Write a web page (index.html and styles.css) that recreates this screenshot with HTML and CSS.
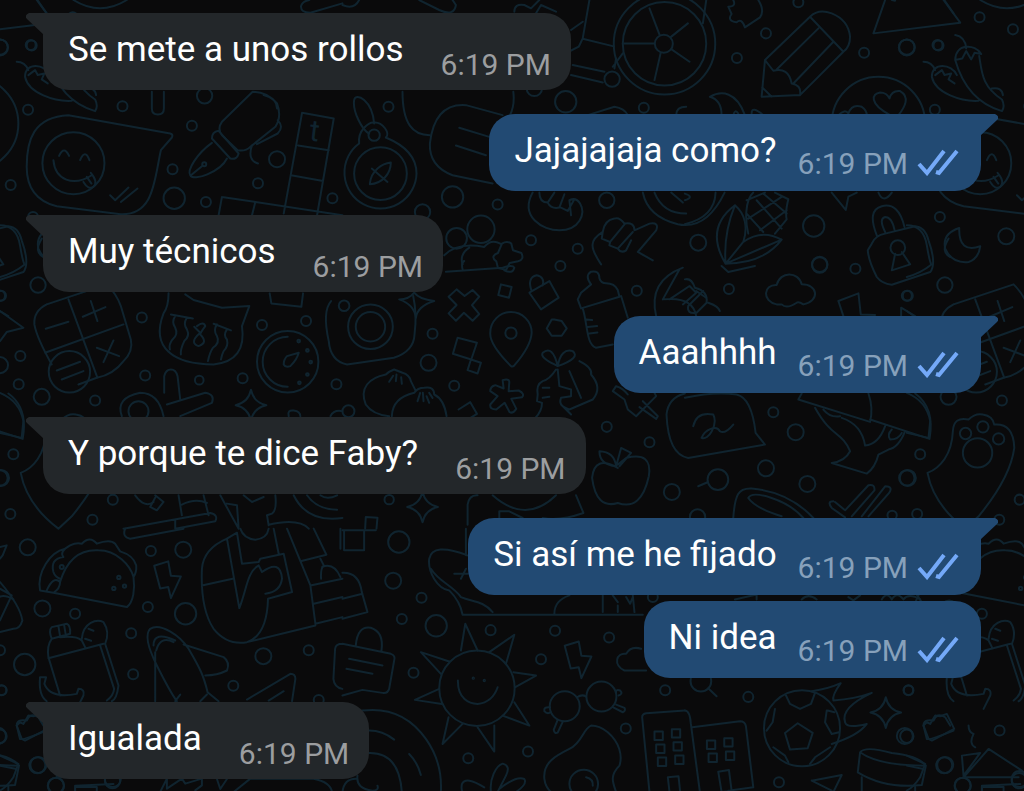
FILE: index.html
```html
<!DOCTYPE html>
<html lang="es">

<head>
  <meta charset="utf-8">
  <meta name="viewport" content="width=device-width, initial-scale=1">
  <title>Chat</title>
  <link rel="stylesheet" href="styles.css">
</head>

<body>
  <!-- wallpaper -->
  <svg class="wallpaper" viewBox="0 0 3072 2373" preserveAspectRatio="xMinYMin slice" aria-hidden="true">
    <defs>
      <path id="star" d="M0-46Q8-8 46 0Q8 8 0 46Q-8 8-46 0Q-8-8 0-46z" />
      <path id="bolt" d="M-42-42L0-55L8-12L38-10L8 55L0 22L-24 26z" />
      <g id="doodles">
        <!-- row 1, left -->
        <g>
          <path d="M220 0Q300 50 380 0M112 0L140 40M1026 10L930 38q-30 0-28-20 5-15 25-18" />
          <path d="M50 185q25 0 35 25M75 230c0-45 60-40 75-5M75 230c10 50 90 75 140 72M85 225l20-15 8 15 20-5-8 18 18 12M145 105q30 5 33 40M145 180c0-50 60-50 78-18l-20-4-10 20-15-25-12 22-21 5c20 70 60 130 140 153q10-15 0-35c-60-40-60-80-68-130M255 265q30-5 33 20" />
          <path d="M205 345L510 400q10 3 5 12L482 450c-20 90-20 195-120 192L170 618C100 600 80 550 80 500C80 420 100 350 205 345z" />
          <path d="M177 467q15-32 30 0M240 480q15-35 28 0M160 480c5 60 60 80 115 45M250 545q15 25 30 15 15-15-8-42M260 530l14 20M330 585l15 15 40-38M362 605l50-40" />
          <path d="M757 275L665 365Q650 385 665 405L712 450Q735 455 750 440L825 380Q845 350 830 310Q800 275 757 275M790 285q40 10 40 40M832 360q20 20 0 40L770 432M755 435q-15 45 18 55" />
          <path d="M655 392L715 460q-5 20-25 15L635 415q0-20 20-23zM635 428C590 460 560 510 570 525C580 545 660 515 680 475M572 525L605 498" />
          <path d="M905 338L1000 355L950 645M905 338L850 640M893 436l92 14M876 526l92 16M665 590L1026 645M665 590L655 645M765 605L755 645M455 275v50q0 18 18 18t18-18v-50" />
          <path d="M0 675q50 0 60 60t15 57Q40 820 0 830M125 715q-25 40 5 55" />
          <circle cx="220" cy="489" r="93" /><circle cx="612" cy="492" r="6" />
          <circle cx="92" cy="135" r="15" /><circle cx="84" cy="329" r="15" /><circle cx="367" cy="318" r="15" />
          <circle cx="575" cy="377" r="15" /><circle cx="517" cy="507" r="15" /><circle cx="32" cy="554" r="15" />
          <circle cx="617" cy="605" r="15" /><circle cx="773" cy="549" r="15" /><circle cx="996" cy="594" r="15" />
          <circle cx="0" cy="141" r="23" /><circle cx="613" cy="287" r="23" /><circle cx="830" cy="477" r="24" />
          <circle cx="522" cy="594" r="32" />
          <text x="924" y="420" transform="rotate(7 924 420)">t</text>
        </g>
        <!-- row 1, middle -->
        <g transform="translate(1026 0)">
          <path d="M0 15q35 15 50-15M230 0l60 30q45 20 50-15l-10-15M515 35q0-25 30-20l20 10 25-25M580 40l15-25 45 20M740 0l-20 115-12 25-30 15M723 117l90 22M720 65l-35 25M810 200l30-40M690 195l95 20M685 225l95 22M820 175l-5 30" />
          <path d="M960 130L920 25M960 130H840M960 130L935 240M960 130L1040 185M960 130L1035 70M1080 70l10-70" />
          <circle cx="965" cy="131" r="152" /><circle cx="965" cy="131" r="125" /><circle class="solid" cx="963" cy="131" r="27" />
          <circle cx="808" cy="237" r="23" />
          <path d="M95 370C90 300 40 275 35 300C30 335 60 390 80 400M180 275C180 370 210 405 262 405M512 275q5 40-10 70" />
          <path d="M50 430C45 390 80 365 95 367C120 365 145 400 130 412Q222 450 222 520A108 108 0 1 1 50 430" />
          <path d="M82 552C85 510 120 490 145 487C145 520 120 550 82 552zM88 505L135 545" />
          <circle cx="95" cy="405" r="17" /><circle cx="114" cy="520" r="79" />
          <path d="M480 345L370 315C300 310 270 360 262 430C260 480 290 510 330 525L450 550M350 383L440 410M340 436L430 465" />
          <path d="M570 577C530 650 600 690 650 690C710 690 730 640 712 610Q700 590 680 600l5 45M590 577q0 30 25 30l20-30M615 607q10 20 35 15l15-40M650 620l25 12 20-35" />
          <path d="M775 792C740 740 740 720 780 695Q785 660 815 655q15-5 30 15 30-5 30 20l45-20q30-5 20 20L885 755l45 25M780 695l-3 20 25 10 45-55M802 725l-2 10 25 10 45-50M825 745q10 15 25 5l15-30" />
          <path d="M900 577Q915 650 1005 672Q1090 690 1145 577M935 577Q960 640 1030 640M985 577l35 30M735 345l80-25q30 5 40 25M1000 345q0-25 30-25" />
          <path d="M305 765q40-40 120-25 20-25 48-10M360 792q-10-30 20-50M478 730q15-10 28 0l5 20 25 8q10 20-10 25l-25 5-10 20-25-5-5-20q-20-15 5-25z" />
          <circle cx="138" cy="320" r="15" /><circle cx="669" cy="305" r="32" /><circle cx="903" cy="323" r="15" />
          <circle cx="330" cy="590" r="32" /><circle cx="465" cy="613" r="15" /><circle cx="240" cy="635" r="23" />
          <circle cx="415" cy="687" r="41" /><circle cx="342" cy="714" r="31" /><circle cx="565" cy="720" r="15" />
          <circle cx="705" cy="745" r="15" /><circle cx="792" cy="600" r="23" /><circle cx="575" cy="265" r="23" />
        </g>
        <!-- row 1, right -->
        <g transform="translate(2052 0)">
          <path d="M145 0q10 20-15 20l10 22q-15 20 15 25 15-15 25 15l45-30q15-20-5-52" />
          <path d="M240 180L375 50Q400 25 440 40Q490 60 495 110Q495 140 475 155L345 285L230 290zM375 50L475 155M400 85L275 208M445 125L325 250M240 180L265 212Q310 200 320 250Q350 255 345 285M232 262L260 290" />
          <path d="M600 0L565 100L825 68L775 0M620 0l10 2" />
          <path d="M75 290C110 270 155 275 180 345M75 290Q110 300 110 345M145 345q5-20 15-5M200 340q0-25 35 5" />
          <circle cx="580" cy="370" r="140" />
          <path d="M615 345C550 310 560 280 585 277Q605 277 613 295Q620 270 645 273C675 290 660 320 640 345M460 345q20-20 30-5 10-30 40-20 15 10 15 25" />
          <path d="M150 615C180 640 190 680 175 725L122 790C80 720 90 660 150 615zM150 615Q115 700 122 790M175 725Q230 685 290 718C250 770 190 790 122 790L290 718" />
          <path d="M205 577C180 600 180 660 190 700M270 577l40 20q-10 40-5 60L270 700M215 600L290 685M235 580L305 640M185 640L235 695M290 590L190 655M305 630L225 690M240 577L185 600" />
          <path d="M0 600q30-10 0-20M92 577Q90 650 0 672M440 577l42 52 8-40 25-12M580 577q15 35 40 0" />
          <path d="M575 705Q545 630 590 618Q640 605 658 680M600 695Q580 655 600 650Q620 650 628 688M560 730Q570 705 600 700L690 678Q720 680 730 720Q755 790 735 815L620 853Q590 850 575 830Q550 780 548 750zM630 760L620 810L675 792L650 755" />
          <circle cx="638" cy="742" r="22" />
          <path d="M822 683Q770 700 780 745Q800 790 850 785Q880 775 885 738Q820 760 822 683z" />
          <circle cx="243" cy="100" r="15" /><circle cx="156" cy="174" r="15" /><circle cx="340" cy="7" r="15" />
          <circle cx="537" cy="158" r="15" /><circle cx="665" cy="142" r="24" /><circle cx="760" cy="136" r="15" />
          <circle cx="883" cy="52" r="15" /><circle cx="983" cy="88" r="15" /><circle cx="386" cy="677" r="32" />
          <circle cx="40" cy="727" r="24" /><circle cx="764" cy="650" r="15" /><circle cx="963" cy="708" r="24" />
          <circle cx="404" cy="792" r="23" />
        </g>
        <!-- row 2, left -->
        <g transform="translate(0 792)">
          <path d="M140 120L320 60Q350 90 362 125L392 225Q400 260 370 290Q340 330 290 340L235 360M155 300Q110 220 103 180Q100 140 140 120M205 105L292 340M135 265L370 180M137 193L205 172M248 157L316 128M272 110L292 170M290 250L357 275M340 228L310 293" />
          <circle cx="208" cy="322" r="62" />
          <path d="M170 318L240 292M185 345L250 320" />
          <path d="M505 87q0 40-15 60C450 250 520 300 640 300Q740 290 725 185L747 125L665 130L580 107L555 90" />
          <path d="M512 150L578 162M525 155q-12 18 0 35 10 20-8 35-12 15-8 30M560 160q-12 18 0 35 10 20-8 35-12 25-10 40M640 178L692 198M650 180q-12 18 0 35 10 20-12 35-10 15-15 40M680 195q-12 18 0 30 5 20-10 35-5 10-8 25M590 185q20-15 25 0-15 20-15 25 25 25-5 35-30-10 5-40l-18-18" />
          <path d="M492 385V335q5-20 20-20t20 20L540 405M500 420L615 385q30 5 20 30L540 455M365 455Q345 400 420 385Q475 385 490 455" />
          <circle cx="415" cy="440" r="30" /><circle cx="862" cy="292" r="92" />
          <path d="M862 217A75 75 0 0 0 862 367M850 300Q850 285 860 275L895 265Q890 285 870 305Q855 310 850 300z" />
          <circle cx="895" cy="230" r="4" /><circle cx="921" cy="258" r="4" /><circle cx="931" cy="293" r="4" /><circle cx="921" cy="330" r="4" /><circle cx="897" cy="355" r="4" />
          <path d="M808 87l5 30 90 10 5-40M0 140L70 190L20 203L0 230M0 385Q60 410 70 470L65 520L0 505" />
          <use href="#star" x="752" y="422" />
          <path d="M865 455q-5-20 15-17t20 17M990 455q10-20 36-15" />
          <path d="M62 625C100 610 135 570 138 500Q140 455 185 465Q205 445 228 450Q258 455 262 480Q320 475 322 550Q310 640 215 755L175 792Q80 720 62 625z" />
          <path d="M405 692q30 40 55 20M465 692l25 20-20 25-20-10 15-28M535 692l10 60M610 692l15 60M545 720q40-20 75-5M370 792L630 745q25 5 15 25L525 792V765M660 692l55 100-5-70-30-5M825 692q5 45-10 55l-15 5 5 30M805 780q90-20 120 12M730 692l25 20 35-15" />
          <path d="M880 692Q920 775 1026 760M920 692Q950 735 1010 735M960 692q20 15 50 0" />
          <path d="M992 110Q965 140 985 230Q990 290 1040 300L1180 280Q1240 260 1242 210Q1250 150 1238 95" />
          <circle cx="425" cy="159" r="15" /><circle cx="61" cy="275" r="15" /><circle cx="56" cy="359" r="15" />
          <circle cx="435" cy="333" r="15" /><circle cx="597" cy="347" r="13" /><circle cx="727" cy="341" r="15" />
          <circle cx="785" cy="182" r="15" /><circle cx="917" cy="170" r="15" /><circle cx="285" cy="408" r="15" />
          <circle cx="1008" cy="359" r="15" /><circle cx="40" cy="569" r="15" /><circle cx="338" cy="705" r="15" />
          <circle cx="277" cy="765" r="15" /><circle cx="31" cy="748" r="15" /><circle cx="0" cy="94" r="15" />
          <circle cx="114" cy="62" r="23" /><circle cx="125" cy="397" r="24" /><circle cx="0" cy="302" r="24" />
          <circle cx="0" cy="640" r="23" />
        </g>
        <!-- row 2, middle -->
        <g transform="translate(1026 792)">
          <circle cx="84" cy="187" r="67" /><circle cx="84" cy="187" r="44" /><circle cx="5" cy="124" r="16" />
          <path d="M170 105q30 0 45-20 15 20 60 25-50 15-55 50-5-40-50-55z" />
          <path d="M342 75l24 20 24-18 20 20-22 25 22 27-20 20-26-24-24 24-22-22 24-25-24-25z" />
          <path d="M475 60l32 8-8 32-32-8zM345 220l58 15-17 50-55-17zM385 285l30 10-10 32-30-10zM348 435l35-22 20 35-35 22" />
          <path d="M560 85L620 50L648 100L595 135zM567 80q-15-40 15-47 25 5 18 30M635 165l22 5 15 22-15 22h-30l-15-22 15-27z" />
          <path d="M505 305Q440 240 443 205A62 62 0 0 1 567 205Q565 245 515 303q-5 5-10 2z" /><circle cx="505" cy="206" r="17" />
          <path d="M310 22L480 10q30-10 35 0-5 20-30 8M360 15q-5-20 5-25" />
          <path d="M705 105L715 85L745 60q-20-25 0-38 25-5 25 20 5 15 20 15 25 0 35 20l5 20L715 132zM720 132C735 180 730 240 760 250L810 240M835 95L855 160M730 165l18 2M735 188l28-3M740 207l24-3" />
          <path d="M70 420C50 370 80 340 130 330q10-10 25-15l25 10q20 5 25 25l15 30M70 420q20 30 70 35M148 455Q150 400 215 385q10-15 30-15 30-5 30 20Q305 405 312 455M140 352l12-18M160 350l2-20M178 358l-2-20M225 410l8-25M243 410l-2-25M260 415l-8-20M270 400l-10-15" />
          <path d="M480 347q20-5 20 5l-2 28 30-2q20 10 10 20l-32 5 15 30q-10 15-20 10l-15-28-25 20q-20 0-18-15l22-25-22-15q0-15 15-18l25 10z" />
          <path d="M645 305Q590 280 600 265q30-25 45 40Q655 250 690 260q25 20-45 45zM640 315q-20 30-40 35-20 10-15 40l-2 20 15 5q0 25-20 45M645 315l5 50 35 10v20M680 320L715 400M710 290q40 20 35 40 35 40 5 75l-70 30q-35-10-25-35l30-5M600 370l20 0M600 400l20-3M655 420l30 30" />
          <path d="M855 390q-15-20-35-25l-10 15 35 25 10 30 25 20 60-60-5-10M900 410l45 45-5 8-50-35" />
          <path d="M825 610Q755 570 748 640Q760 735 825 715Q895 740 918 635Q930 560 850 580L825 600M820 605Q770 600 770 560Q815 562 820 605L835 550L865 565L830 605" />
          <path d="M450 692Q550 780 640 692M700 692L722 745Q650 770 600 760M375 720q5-30 30-28M375 720v60M470 740h30l40 20M470 740v20" />
          <use href="#star" x="240" y="727" />
          <path d="M68 792l2-35 35 2-3 33" />
          <path d="M940 155Q915 50 1020 10M1060 155q-10-60-100-50l50-90M980 105l60-40 20 20-40 35M1060 80l30 20" />
          <circle cx="270" cy="208" r="15" /><circle cx="258" cy="295" r="24" /><circle cx="335" cy="364" r="15" />
          <circle cx="882" cy="79" r="15" /><circle cx="792" cy="487" r="15" /><circle cx="920" cy="533" r="15" />
          <circle cx="987" cy="682" r="24" /><circle cx="140" cy="705" r="14" /><circle cx="653" cy="5" r="15" />
          <circle cx="18" cy="440" r="18" />
        </g>
        <!-- row 2, right -->
        <g transform="translate(2052 792)">
          <path d="M0 45q20-5 30 25 40 10 35 45l-30 30q-30 5-25-20l45-45M70 115q30 10 35 25" />
          <path d="M275 120C230 110 235 60 275 62C285 20 340 20 350 60C400 60 405 110 355 120Q340 110 335 115Q305 135 290 120z" />
          <path d="M460 110L520 87L527 150L570 152M475 155L460 110M648 155V130L690 155M110 5l20 18 80-18" />
          <path d="M0 387Q-50 400-55 450Q-50 570 10 580L240 540L212 505Q200 400 155 390Q90 380 0 400M25 485Q35 440 85 450C100 480 70 530 50 520C60 495 95 480 105 500Q120 510 145 480" />
          <path d="M350 387L340 405L555 472Q565 430 550 387M555 465L733 523Q750 430 690 387M390 430C440 520 470 500 495 560Q480 590 440 595L545 627Q570 610 580 570Q600 560 610 555Q640 550 660 500M415 435q20 25 50 20M470 460Q530 480 540 543Q580 540 600 485M620 495q-15 15-5 30 25 0 35-20" />
          <circle cx="99" cy="645" r="31" /><path d="M40 665l28-12" />
          <path d="M145 760C150 690 160 670 200 672Q310 680 385 760M190 700Q200 680 260 700Q320 720 355 760M190 700Q210 730 290 755" />
          <path d="M445 710q-20 0-5 20l40 28M450 712l30 25 70-75q20-5 18 15L500 755M530 755L600 665q25 0 12 20L550 755" />
          <circle cx="877" cy="565" r="44" /><circle cx="841" cy="507" r="17" /><circle cx="893" cy="487" r="17" /><circle cx="940" cy="523" r="17" />
          <circle cx="132" cy="74" r="15" /><circle cx="404" cy="2" r="23" /><circle cx="511" cy="13" r="15" />
          <circle cx="668" cy="94" r="15" /><circle cx="265" cy="443" r="15" /><circle cx="332" cy="503" r="24" />
          <circle cx="243" cy="611" r="24" /><circle cx="367" cy="658" r="24" /><circle cx="668" cy="640" r="24" />
          <circle cx="38" cy="757" r="23" /><circle cx="621" cy="752" r="14" />
        </g>
        <!-- row 3, left -->
        <g transform="translate(0 1584)">
          <path d="M375 0q-10 25 15 30L550 0M0 55l20-5-12 30-8 10M0 160Q60 230 67 275Q60 300 40 300L0 310M0 180L35 200L0 275" />
          <path d="M120 185C110 130 150 70 195 60L210 50Q230 40 245 45Q270 20 290 45Q330 30 345 45L360 68Q400 80 408 110Q410 130 400 145C405 180 400 220 380 235L160 192zM180 160Q210 60 295 65C350 65 390 110 400 145M120 185L160 192Q180 180 180 160Q160 140 140 185M195 60Q180 75 190 85Q150 90 160 130Q165 145 180 150" />
          <circle class="solid" cx="356" cy="146" r="5" /><circle class="solid" cx="341" cy="179" r="5" /><circle class="solid" cx="373" cy="172" r="5" />
          <circle cx="185" cy="115" r="6" />
          <use href="#bolt" x="504" y="153" />
          <path d="M720 0Q730 30 765 33Q800 30 805 0M680 30Q610 60 605 120Q600 240 640 300Q680 350 740 340Q800 320 803 210L875 190L850 75L780 90L775 100L725 105L710 12L680 30L717 238C740 180 740 130 775 110L785 130Q840 90 845 150Q840 190 795 195M605 170L697 150M820 0L835 75M740 340L945 290M860 0L930 170L945 285L1026 265M940 0L978 78L903 97M930 170L1026 150M940 225L1026 205M960 90L970 110Q960 120 962 150M965 115Q1000 100 1020 145M1020 0V60" />
          <path d="M155 295L200 285Q212 290 210 315L155 330Q145 305 155 295zM175 292l5 30M192 288l5 30M155 330Q140 350 145 385L180 500M145 388L310 345M180 325Q230 320 245 335L255 355M245 330C250 280 290 270 310 280Q330 310 315 345M265 300l15 6M255 330l18 6M300 350L342 480Q340 500 320 515M315 345L355 470Q350 510 335 517M120 445h18l-5 20Q150 510 230 495L235 480Q255 480 250 500Q240 520 230 540M120 445Q115 500 140 517" />
          <path d="M450 300C430 320 450 370 470 410Q510 490 530 517M450 300C480 280 540 320 565 360C600 420 610 440 622 490L655 517M460 350Q460 305 525 335M468 365Q480 320 520 340M550 347L670 385Q690 400 680 425Q650 440 615 440M465 370V517M525 517l15-20M600 517l20-20" />
          <path d="M740 512L870 435q15 0 15 15L875 517M805 515L850 487" />
          <path d="M50 590Q50 570 80 575Q90 550 115 565L130 590M60 630q5 5 80-25M50 590L60 630M0 680L55 705L40 745Q20 775 0 785M0 710L50 720M225 770v20M225 770L340 765M480 789l20-40v30l45-30 10 15 50-15 0 20-20 15M650 750l10 30 20-30M700 789l50-40h190q50 10 55 40" />
          <circle cx="83" cy="56" r="24" /><circle cx="452" cy="67" r="15" /><circle cx="549" cy="63" r="24" />
          <circle cx="127" cy="239" r="24" /><circle cx="225" cy="255" r="15" /><circle cx="443" cy="235" r="15" />
          <circle cx="556" cy="255" r="32" /><circle cx="393" cy="313" r="15" /><circle cx="74" cy="407" r="32" />
          <circle cx="0" cy="364" r="15" /><circle cx="399" cy="436" r="15" /><circle cx="789" cy="382" r="24" />
          <circle cx="925" cy="364" r="15" /><circle cx="699" cy="471" r="15" /><circle cx="955" cy="513" r="15" />
          <circle cx="5" cy="484" r="14" /><circle cx="112" cy="709" r="24" /><circle cx="167" cy="770" r="24" />
          <circle cx="337" cy="755" r="23" /><circle cx="0" cy="622" r="20" />
        </g>
        <!-- row 3, middle -->
        <g transform="translate(1026 1584)">
          <path d="M0 5h100M5 65h60V5M5 5v60M0 132Q50 130 58 190L75 250L0 270M0 210L60 195" />
          <path d="M375 80Q270 40 260 90C255 130 285 180 320 185C345 210 355 230 360 258H900M265 120C290 160 330 170 355 205C390 220 420 215 450 250M370 0v80M335 135h40M355 150l15-30M635 255Q635 215 680 200M780 200v50M870 200l5 50M850 205l12 20 8-20M810 200l15 20M825 230v20" />
          <path d="M0 345L145 375q15 5 10 20L140 480q-5 15-20 12L60 483L0 500M0 345Q-20 345-22 360L-27 450Q-25 475 0 480M40 350Q45 290 85 297Q125 310 117 365M20 390L120 410M12 420L90 435" />
          <circle cx="403" cy="478" r="113" />
          <path d="M355 365L368 285L405 365M440 370L515 318L490 405M512 430L580 440L518 475M515 520L560 590L480 560M455 590V668L405 595M360 585L300 645L318 565M298 525L217 513L290 480M295 435L235 370L320 398M346 455C345 510 380 525 405 525Q450 520 465 475" />
          <circle class="solid" cx="392" cy="448" r="2" /><circle class="solid" cx="425" cy="455" r="2" />
          <use href="#bolt" x="708" y="393" />
          <path d="M910 425H845C810 410 820 370 850 375Q865 350 895 360" />
          <circle cx="666" cy="532" r="45" /><circle cx="776" cy="503" r="45" />
          <path d="M703 505q15-10 27-2M622 535q-20-2-17 12 8 10 20 3M645 573l-12 30q2 12 12 8l15-32M820 490q0-10 12-5 10 10-5 15M810 535l30 15q10-5 5-13l-25-10" />
          <path d="M605 750C600 700 640 680 680 660C720 640 720 600 745 590Q770 590 795 610C830 640 840 680 830 710C800 740 810 760 820 789M605 750Q608 775 625 789" />
          <circle cx="723" cy="765" r="43" /><path d="M730 745q22 5 20 25" />
          <path d="M425 775Q370 740 358 765Q355 780 360 789M445 789C440 750 460 710 480 704Q505 710 490 740L465 789M470 780Q520 740 545 750Q555 765 520 789" />
          <path d="M60 545Q180 530 250 630Q300 700 295 789M80 605Q120 605 155 632M80 672Q170 670 178 789M200 675Q225 700 235 738M45 740Q40 780 90 785Q110 785 105 770M0 789q5-40 40-40" />
          <path d="M920 789L898 565q0-10 12-12L1026 545M975 745l32-3 5 47M980 789l-5-44" />
          <path d="M935 608h25v25h-25zM987 601h25v25h-25zM940 647h25v25h-25zM992 640h25v25h-25zM945 686h25v25h-25zM997 680h25v25h-25z" />
          <circle cx="169" cy="40" r="32" /><circle cx="152" cy="156" r="24" /><circle cx="237" cy="207" r="15" />
          <circle cx="178" cy="271" r="15" /><circle cx="281" cy="291" r="32" /><circle cx="444" cy="304" r="15" />
          <circle cx="637" cy="306" r="15" /><circle cx="799" cy="326" r="15" /><circle cx="595" cy="391" r="15" />
          <circle cx="213" cy="432" r="15" /><circle cx="967" cy="484" r="15" /><circle cx="849" cy="599" r="15" />
          <circle cx="377" cy="688" r="15" /><circle cx="556" cy="668" r="15" /><circle cx="930" cy="205" r="15" />
        </g>
        <!-- row 3, right -->
        <g transform="translate(2052 1584)">
          <path d="M150 212l65-15v15M350 212q20-20 45 0M490 205l15 10 20-15M590 212q15-25 30 0 15-25 35 0 15-20 50 0" />
          <circle cx="48" cy="457" r="31" /><path d="M70 478l25 24M0 545q15 0 18 40L45 789M22 595L165 577q15 0 18 15L205 775L130 785M100 728l32-5 8 62-30 4z" />
          <path d="M66 635h25v25h-25zM118 628h25v25h-25zM71 674h25v25h-25zM123 668h25v25h-25z" />
          <circle cx="351" cy="598" r="114" />
          <path d="M338 583L383 612L368 658L315 662L300 612zM303 500L315 525L345 540L378 525L390 492M425 545L420 580L440 615L462 610M428 545l20 5M270 540L263 580L245 605M265 655L300 680L310 700M375 705L390 685L435 655" />
          <path d="M380 487Q430 480 467 463Q440 500 445 515Q510 510 560 492C500 520 470 550 480 580Q485 600 545 585Q520 620 440 645" />
          <use href="#star" x="602" y="551" />
          <path d="M715 590L725 580L735 585L750 560L765 562L785 555L807 600L740 635L730 630zM525 670Q540 650 620 672Q700 680 722 710L710 768Q600 780 518 730zM525 670Q580 710 722 710M530 745V789M690 775v14M380 755L470 738L445 789M380 755L440 785" />
          <path d="M850 590q0 20 15 25-15 30 5 40M830 680L885 672L835 740zM835 745L910 660L1010 725M835 745H1000M890 789v-15h65v15" />
          <circle cx="833" cy="770" r="24" /><circle cx="1003" cy="750" r="24" /><circle cx="780" cy="708" r="24" />
          <circle cx="190" cy="504" r="15" /><circle cx="670" cy="484" r="15" /><circle cx="659" cy="621" r="24" />
          <circle cx="282" cy="760" r="15" /><circle cx="943" cy="605" r="15" />
        </g>
      </g>
    </defs>
    <use href="#doodles" />
    <use href="#doodles" x="-2717" />
    <use href="#doodles" x="2717" />
  </svg>

  <!-- icons shared by the messages -->
  <svg class="sprite" aria-hidden="true">
    <symbol id="tail" viewBox="0 0 18 22">
      <path d="M18 0H3Q-2 2 1 6L18 22z" />
    </symbol>
    <symbol id="read" viewBox="0 0 42 28">
      <path d="M2 16L10 25L27 3M19 24L22 25L40 3" />
    </symbol>
  </svg>

  <main class="chat">
    <div class="message received">
      <svg class="tail"><use href="#tail" /></svg>
      <p class="text">Se mete a unos rollos</p>
      <time class="time">6:19 PM</time>
    </div>
    <div class="message sent">
      <svg class="tail"><use href="#tail" /></svg>
      <p class="text">Jajajajaja como?</p>
      <time class="time">6:19 PM</time>
      <svg class="read"><use href="#read" /></svg>
    </div>
    <div class="message received">
      <svg class="tail"><use href="#tail" /></svg>
      <p class="text">Muy técnicos</p>
      <time class="time">6:19 PM</time>
    </div>
    <div class="message sent">
      <svg class="tail"><use href="#tail" /></svg>
      <p class="text">Aaahhhh</p>
      <time class="time">6:19 PM</time>
      <svg class="read"><use href="#read" /></svg>
    </div>
    <div class="message received">
      <svg class="tail"><use href="#tail" /></svg>
      <p class="text">Y porque te dice Faby?</p>
      <time class="time">6:19 PM</time>
    </div>
    <div class="message sent">
      <svg class="tail"><use href="#tail" /></svg>
      <p class="text">Si así me he fijado</p>
      <time class="time">6:19 PM</time>
      <svg class="read"><use href="#read" /></svg>
    </div>
    <div class="message sent grouped">
      <p class="text">Ni idea</p>
      <time class="time">6:19 PM</time>
      <svg class="read"><use href="#read" /></svg>
    </div>
    <div class="message received">
      <svg class="tail"><use href="#tail" /></svg>
      <p class="text">Igualada</p>
      <time class="time">6:19 PM</time>
    </div>
  </main>
</body>

</html>
```
FILE: styles.css
```css
* {
  margin: 0;
  padding: 0;
  box-sizing: border-box;
}

body {
  position: relative;
  min-height: 100vh;
  overflow-x: hidden;
  background-color: #0a0a0b;
  font-family: Roboto, "Liberation Sans", sans-serif;
}

/* wallpaper */
.wallpaper {
  position: absolute;
  top: 0;
  left: 0;
  width: 100%;
  height: 100%;
  fill: none;
  stroke: #10242f;
  stroke-width: 6;
  stroke-linecap: round;
  stroke-linejoin: round;
}

.wallpaper text {
  font-size: 90px;
  fill: #10242f;
  stroke: none;
}

.wallpaper .solid {
  fill: #0a0a0b;
}

.sprite {
  display: none;
}

/* messages */
.chat {
  position: relative;
  display: flex;
  flex-direction: column;
  gap: 24px;
  padding: 13px 43px;
}

.message {
  position: relative;
  display: flex;
  align-items: flex-end;
  max-width: 85%;
  padding-left: 25px;
  border-radius: 26px;
  color: #fff;
}

.received {
  align-self: flex-start;
  gap: 37px;
  padding-right: 20px;
  border-top-left-radius: 0;
  background-color: #23272a;
}

.sent {
  align-self: flex-end;
  gap: 21px;
  padding-right: 22px;
  border-top-right-radius: 0;
  background-color: #224a73;
}

.grouped {
  margin-top: -18px;
  border-top-right-radius: 26px;
}

.text {
  padding: 16px 0 19px;
  font-size: 35px;
  line-height: 42px;
}

.time {
  padding-bottom: 7px;
  font-size: 30px;
  line-height: 36px;
  color: #9c9ea0;
  white-space: nowrap;
}

.sent .time {
  padding-bottom: 9px;
  color: #87a1bb;
}

.tail {
  position: absolute;
  top: 0;
  left: -17px;
  width: 18px;
  height: 22px;
  fill: #23272a;
}

.sent .tail {
  left: auto;
  right: -17px;
  fill: #224a73;
  transform: scaleX(-1);
}

.read {
  flex: none;
  width: 42px;
  height: 28px;
  margin: 0 0 15px -12px;
  fill: none;
  stroke: #74a9f8;
  stroke-width: 4;
}
```
